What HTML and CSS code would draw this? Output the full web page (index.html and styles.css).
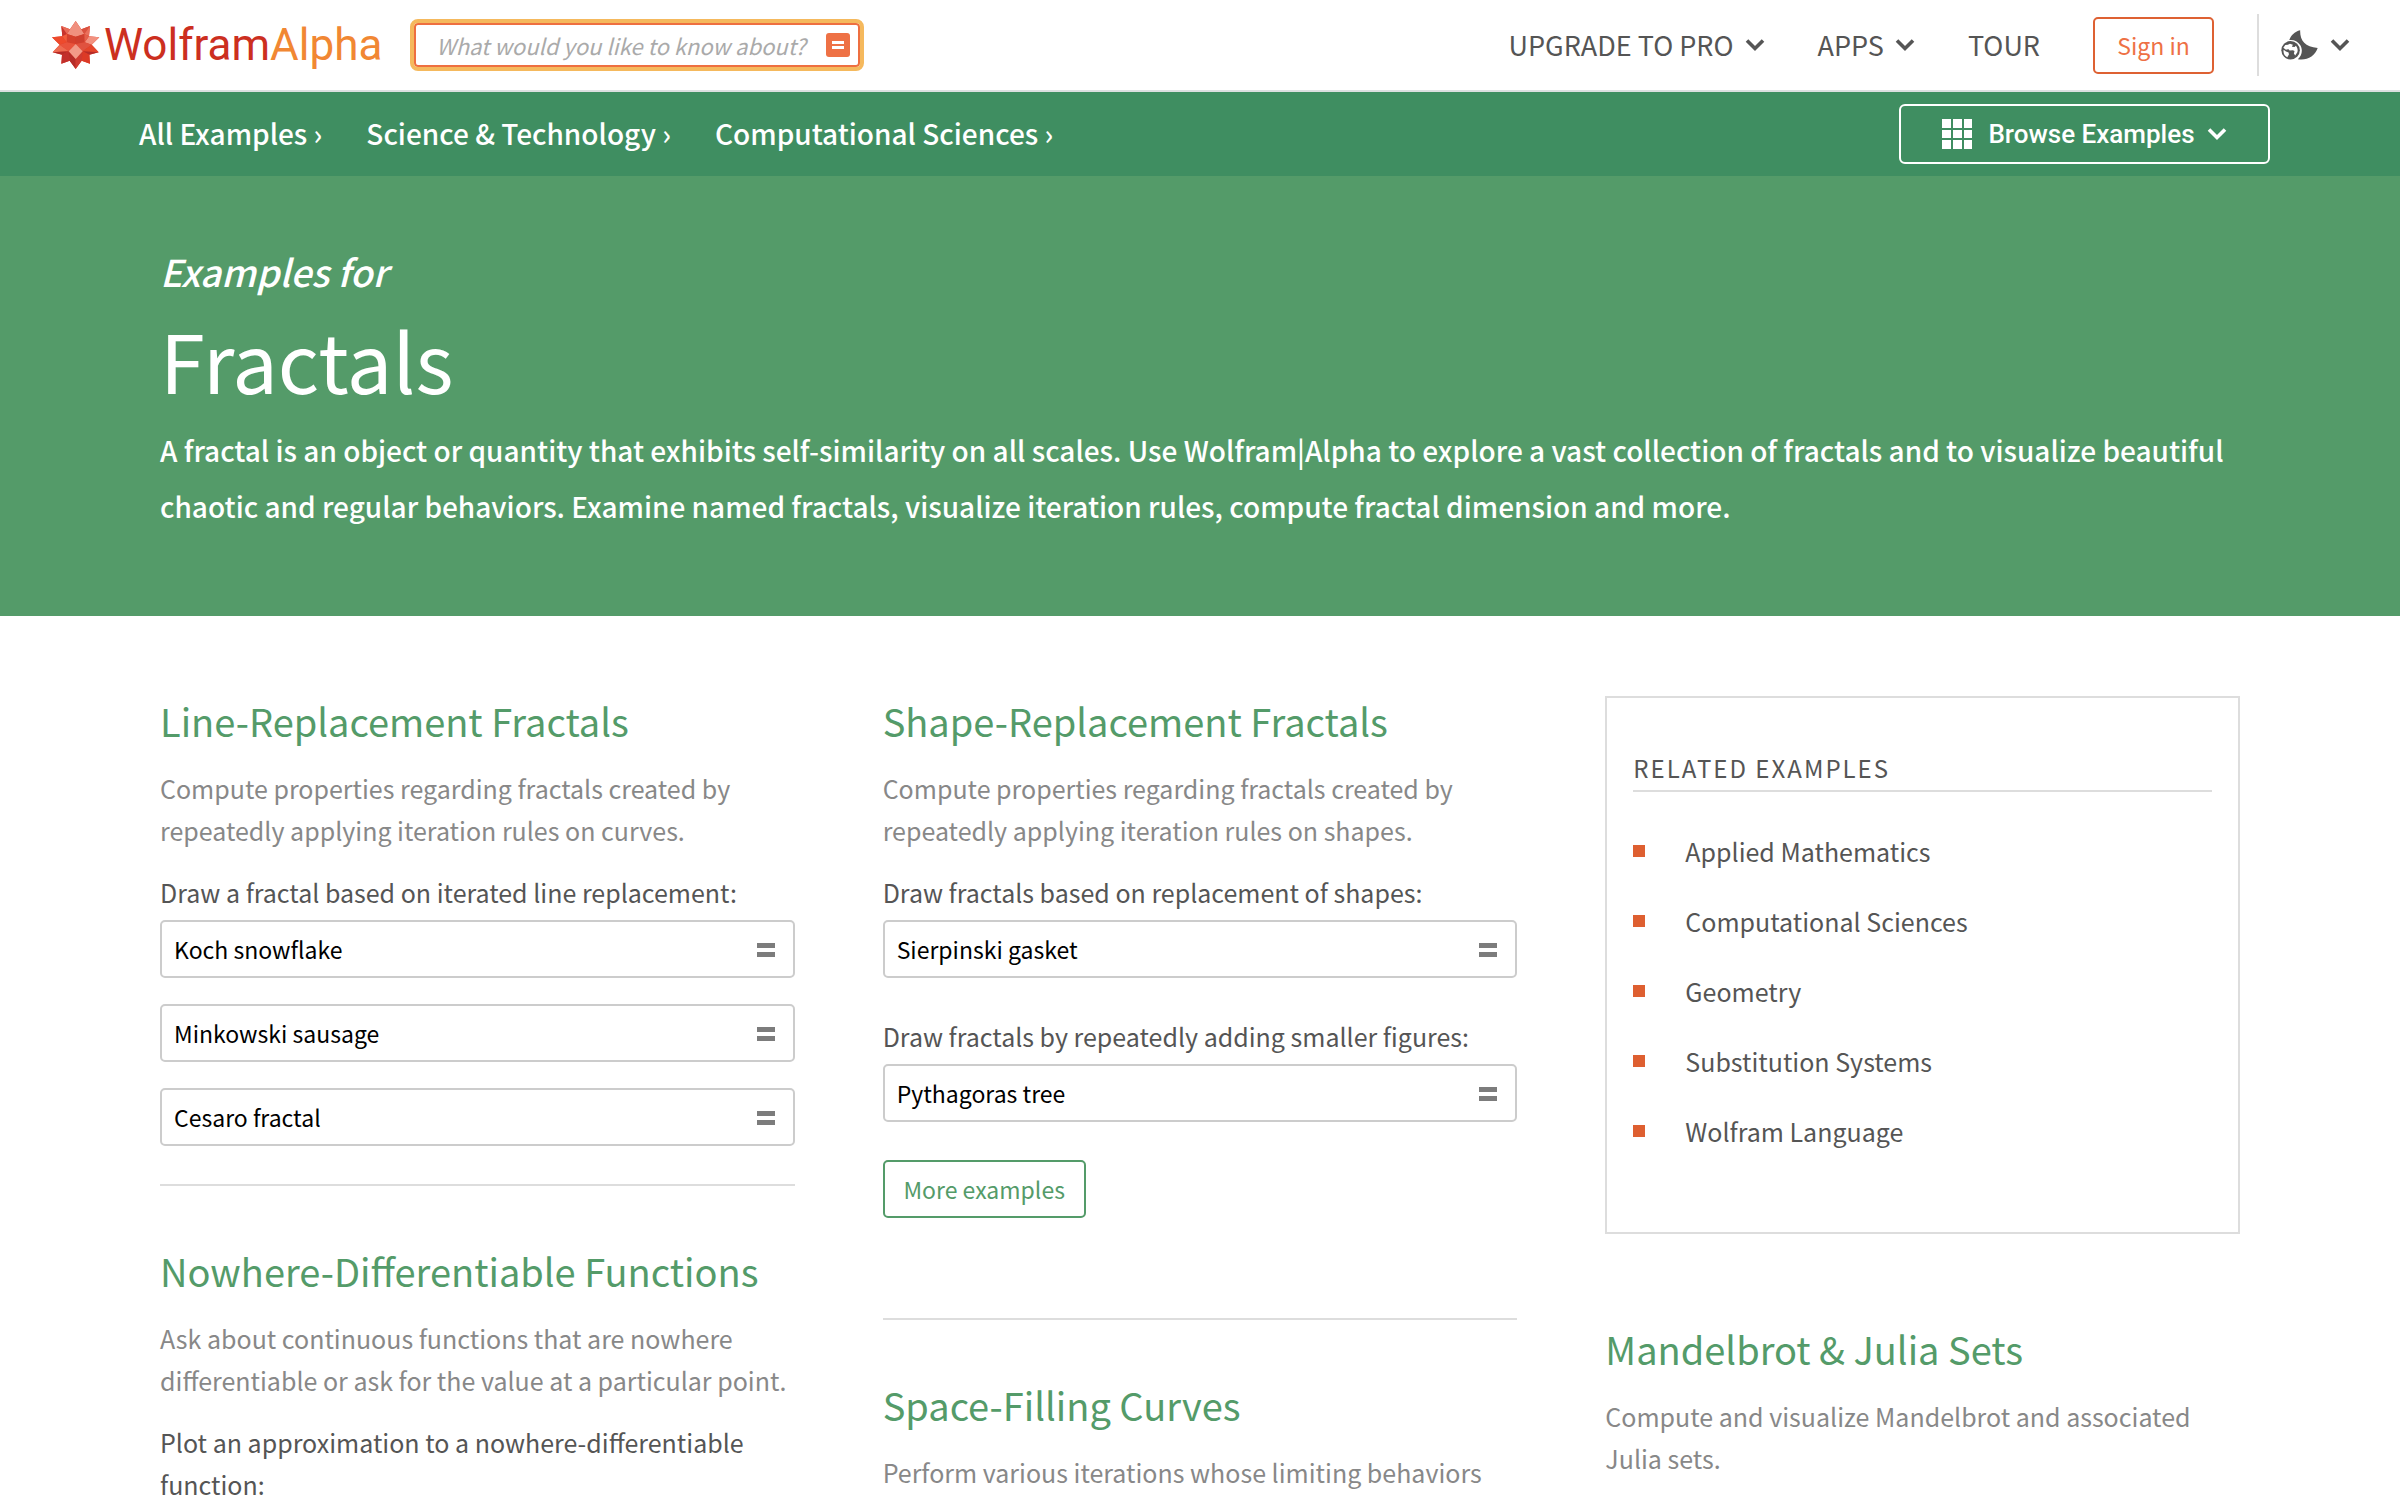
FILE: index.html
```
<!DOCTYPE html>
<html lang="en">
<head>
<meta charset="utf-8">
<title>Fractals - Wolfram|Alpha Examples</title>
<link rel="stylesheet" href="styles.css">
</head>
<body>
<svg class="sprite" aria-hidden="true">
  <symbol id="chevron" viewBox="0 0 20 14"><path d="M2 2.5l8 8 8-8" fill="none" stroke="currentColor" stroke-width="3.6"/></symbol>
  <symbol id="equals" viewBox="0 0 18 14"><path d="M0 0h18v5H0zM0 9h18v5H0z" fill="currentColor"/></symbol>
</svg>

<header class="topbar">
  <a class="logo" href="#" aria-label="WolframAlpha">
    <svg class="spikey" viewBox="20 24 144 144" aria-hidden="true">
      <path fill="#dc3b26" d="M91 24l17 25 26-10-3 31 31 3-23 22 21 23-28 7 2 27-25-9-18 25-18-25-25 9 2-27-28-7 21-23-23-22 31-3-3-31 26 10z"/>
      <path fill="#f0907f" d="M91 24l17 25 9 14-26 8-26-8 9-14z"/>
      <path fill="#c8342c" d="M48 39l17 24-14 7z"/>
      <path fill="#e86a57" d="M48 39l26 10-9 14z"/>
      <path fill="#d9513f" d="M134 39l-26 10 9 14z"/>
      <path fill="#ea6f5c" d="M134 39l-17 24 14 7z"/>
      <path fill="#ee4a2c" d="M20 73l31-3 13 18-21 7z"/>
      <path fill="#f2917f" d="M162 73l-31-3-13 18 21 7z"/>
      <path fill="#f05c3c" d="M51 70l14-7 1 26-2-1z"/>
      <path fill="#d5402d" d="M65 63l26 8v22l-27-5z"/>
      <path fill="#cf3f2f" d="M117 63l-26 8v22l27-5z"/>
      <path fill="#e4604c" d="M131 70l-14-7 1 25z"/>
      <path fill="#e9533c" d="M43 95l21-7 27 5-21 22z"/>
      <path fill="#ee6c52" d="M22 118l21-23 27 20z"/>
      <path fill="#b52c28" d="M22 118l48-3-20 10z"/>
      <path fill="#e0523f" d="M139 95l-21-7-27 5 21 22z"/>
      <path fill="#e4452b" d="M160 118l-21-23-27 20z"/>
      <path fill="#b52c28" d="M160 118l-48-3 20 10z"/>
      <path fill="#c22f2b" d="M48 152l2-27 20-10 3 28z"/>
      <path fill="#dc3a26" d="M134 152l-2-27-20-10-3 28z"/>
      <path fill="#b52c28" d="M70 115l21 23v30l-18-25z"/>
      <path fill="#cf3a30" d="M112 115l-21 23v30l18-25z"/>
      <path fill="#f29a88" d="M91 93l21 22-21 23-21-23z"/>
    </svg>
    <span class="wordmark">Wolfram<span class="wordmark-alpha">Alpha</span></span>
  </a>
  <form class="search">
    <input class="search-input" type="text" placeholder="What would you like to know about?" aria-label="What would you like to know about?">
    <button class="search-go" type="button" aria-label="Compute"><svg viewBox="0 0 12 8" width="12" height="8"><path d="M0 0h12v3H0zM0 5h12v3H0z" fill="#fff"/></svg></button>
  </form>
  <nav class="menu">
    <a class="menu-link" href="#">UPGRADE TO PRO <svg class="chevron"><use href="#chevron"/></svg></a>
    <a class="menu-link" href="#">APPS <svg class="chevron"><use href="#chevron"/></svg></a>
    <a class="menu-link" href="#">TOUR</a>
    <button class="sign-in" type="button">Sign in</button>
  </nav>
  <button class="prefs" type="button" aria-label="Language and theme">
    <svg class="prefs-icon" viewBox="64 29 112 90" aria-hidden="true">
      <path fill="#555" d="M122 29c-1 32 14 51 53 54-8 25-33 39-60 34 14-12 15-31 7-43-7-11-20-17-33-15 5-14 16-26 33-30z"/>
      <circle cx="93" cy="90" r="28" fill="#555"/>
      <path fill="#fff" d="M91 70l9 3-3 6 8 1 4-4c5 6 7 13 4 21l-6 9-4-6 2-8-5-2-10 1-3-4-8 1-8-6 6-8 8-1zM72 88l7 6 8 3 1 6-5 8c-8-4-13-12-11-23z"/>
    </svg>
    <svg class="chevron"><use href="#chevron"/></svg>
  </button>
</header>

<nav class="crumbs" aria-label="Categories">
  <a class="crumb" href="#">All Examples ›</a>
  <a class="crumb" href="#">Science &amp; Technology ›</a>
  <a class="crumb" href="#">Computational Sciences ›</a>
  <button class="browse" type="button">
    <svg class="grid-icon" viewBox="0 0 30 30" aria-hidden="true"><path fill="#fff" d="M0 0h9v9H0zM11 0h9v9h-9zM22 0h8v9h-8zM0 11h9v8H0zM11 11h9v8h-9zM22 11h8v8h-8zM0 21h9v9H0zM11 21h9v9h-9zM22 21h8v9h-8z"/></svg>
    Browse Examples
    <svg class="chevron"><use href="#chevron"/></svg>
  </button>
</nav>

<section class="hero">
  <p class="hero-kicker">Examples for</p>
  <h1 class="hero-title">Fractals</h1>
  <p class="hero-text">A fractal is an object or quantity that exhibits self-similarity on all scales. Use Wolfram|Alpha to explore a vast collection of fractals and to visualize beautiful chaotic and regular behaviors. Examine named fractals, visualize iteration rules, compute fractal dimension and more.</p>
</section>

<main class="columns">
  <div class="column">
    <section class="topic">
      <h2 class="topic-title"><a href="#">Line-Replacement Fractals</a></h2>
      <p class="topic-text">Compute properties regarding fractals created by repeatedly applying iteration rules on curves.</p>
      <div class="examples">
        <label class="example-label" for="koch">Draw a fractal based on iterated line replacement:</label>
        <div class="query"><input id="koch" type="text" value="Koch snowflake"><button type="button" aria-label="Compute"><svg><use href="#equals"/></svg></button></div>
        <div class="query"><input type="text" value="Minkowski sausage" aria-label="Example query"><button type="button" aria-label="Compute"><svg><use href="#equals"/></svg></button></div>
        <div class="query"><input type="text" value="Cesaro fractal" aria-label="Example query"><button type="button" aria-label="Compute"><svg><use href="#equals"/></svg></button></div>
      </div>
    </section>
    <hr class="rule">
    <section class="topic">
      <h2 class="topic-title"><a href="#">Nowhere-Differentiable Functions</a></h2>
      <p class="topic-text">Ask about continuous functions that are nowhere differentiable or ask for the value at a particular point.</p>
      <p class="example-label">Plot an approximation to a nowhere-differentiable function:</p>
    </section>
  </div>

  <div class="column">
    <section class="topic topic-more">
      <h2 class="topic-title"><a href="#">Shape-Replacement Fractals</a></h2>
      <p class="topic-text">Compute properties regarding fractals created by repeatedly applying iteration rules on shapes.</p>
      <div class="examples">
        <label class="example-label" for="gasket">Draw fractals based on replacement of shapes:</label>
        <div class="query"><input id="gasket" type="text" value="Sierpinski gasket"><button type="button" aria-label="Compute"><svg><use href="#equals"/></svg></button></div>
      </div>
      <div class="examples">
        <label class="example-label" for="tree">Draw fractals by repeatedly adding smaller figures:</label>
        <div class="query"><input id="tree" type="text" value="Pythagoras tree"><button type="button" aria-label="Compute"><svg><use href="#equals"/></svg></button></div>
      </div>
      <button class="more" type="button">More examples</button>
    </section>
    <hr class="rule">
    <section class="topic">
      <h2 class="topic-title"><a href="#">Space-Filling Curves</a></h2>
      <p class="topic-text">Perform various iterations whose limiting behaviors</p>
    </section>
  </div>

  <div class="column">
    <aside class="related">
      <h2 class="related-title">RELATED EXAMPLES</h2>
      <ul class="related-list">
        <li><a href="#">Applied Mathematics</a></li>
        <li><a href="#">Computational Sciences</a></li>
        <li><a href="#">Geometry</a></li>
        <li><a href="#">Substitution Systems</a></li>
        <li><a href="#">Wolfram Language</a></li>
      </ul>
    </aside>
    <section class="topic">
      <h2 class="topic-title"><a href="#">Mandelbrot &amp; Julia Sets</a></h2>
      <p class="topic-text">Compute and visualize Mandelbrot and associated Julia sets.</p>
    </section>
  </div>
</main>
</body>
</html>
```
FILE: styles.css
```
* {
  box-sizing: border-box;
  margin: 0;
  padding: 0;
}

body {
  background: #fff;
  color: #555;
  font: 400 25px/42px "Noto Sans CJK SC", "Open Sans", sans-serif;
}

a {
  color: inherit;
  text-decoration: none;
}

button,
input {
  font: inherit;
  color: inherit;
  background: none;
  border: 0;
}

.sprite {
  display: none;
}

.chevron {
  display: block;
  width: 20px;
  height: 14px;
}

/* Top bar */
.topbar {
  display: flex;
  align-items: center;
  height: 92px;
  padding: 0 50px 0 52px;
  border-bottom: 2px solid #dcdfe0;
}

.logo {
  display: flex;
  align-items: center;
  gap: 4px;
}

.spikey {
  display: block;
  width: 48px;
  height: 48px;
}

.wordmark {
  color: #cc2f1f;
  font: 400 44px/48px Roboto, sans-serif;
}

.wordmark-alpha {
  color: #f18733;
}

.search {
  display: flex;
  align-items: center;
  width: 454px;
  height: 52px;
  margin-left: 28px;
  padding: 0 10px 0 22px;
  border: 4px solid #f5b95d;
  border-radius: 8px;
  box-shadow: inset 0 0 0 2px #ee6f40;
}

.search-input {
  flex: 1;
  min-width: 0;
  font-size: 22px;
  line-height: 36px;
  outline: 0;
}

.search-input::placeholder {
  color: #aaa;
  font-style: italic;
  opacity: 1;
}

.search-go {
  display: grid;
  place-items: center;
  width: 24px;
  height: 24px;
  border-radius: 3px;
  background: #ee7145;
}

.menu {
  display: flex;
  align-items: center;
  gap: 53px;
  margin-left: auto;
  font-size: 27px;
}

.menu-link {
  display: flex;
  align-items: center;
  gap: 11px;
}

.sign-in {
  width: 121px;
  height: 57px;
  border: 2px solid #de6133;
  border-radius: 5px;
  color: #ee7145;
  font-size: 23px;
}

.prefs {
  display: flex;
  align-items: center;
  gap: 12px;
  height: 62px;
  margin-left: 43px;
  padding-left: 22px;
  border-left: 2px solid #ddd;
}

.prefs-icon {
  display: block;
  width: 37px;
  height: 30px;
}

/* Category trail */
.crumbs {
  display: flex;
  align-items: center;
  gap: 44px;
  height: 84px;
  padding: 0 130px 0 139px;
  background: #3f8e61;
  color: #fff;
  font-size: 28px;
  font-weight: 500;
  line-height: 40px;
}

.crumb {
  padding-bottom: 2px;
}

.browse {
  display: flex;
  align-items: center;
  justify-content: center;
  width: 371px;
  height: 60px;
  margin-left: auto;
  border: 2px solid #fff;
  border-radius: 6px;
  gap: 12px;
  font: 500 26px/40px Roboto, sans-serif;
}

.grid-icon {
  width: 30px;
  height: 30px;
  margin-right: 4px;
}

/* Hero */
.hero {
  padding: 67px 160px 82px;
  background: #549b69;
  color: #fff;
}

.hero-kicker {
  font-size: 37px;
  font-weight: 500;
  line-height: 56px;
  font-style: italic;
}

.hero-title {
  margin: 10px 0 13px;
  font-size: 81px;
  font-weight: 400;
  line-height: 100px;
}

.hero-text {
  font-size: 28px;
  font-weight: 500;
  line-height: 56px;
}

/* Content columns */
.columns {
  display: grid;
  grid-template-columns: repeat(3, minmax(0, 1fr));
  gap: 88px;
  padding: 80px 160px 0;
}

.topic-title {
  margin-bottom: 21px;
  color: #549b69;
  font-size: 38px;
  font-weight: 400;
  line-height: 50px;
}

.topic-text {
  margin-bottom: 20px;
  color: #888;
}

.examples + .examples {
  margin-top: 37px;
}

.example-label {
  display: block;
}

.query {
  display: flex;
  align-items: center;
  height: 58px;
  padding: 0 18px 0 12px;
  border: 2px solid #ccc;
  border-radius: 5px;
}

.example-label + .query {
  margin-top: 7px;
}

.query + .query {
  margin-top: 26px;
}

.query input {
  flex: 1;
  min-width: 0;
  color: #000;
  font-size: 23px;
}

.query button {
  width: 18px;
  height: 16px;
  padding-top: 2px;
  color: #7c7c7c;
}

.query svg {
  display: block;
  width: 18px;
  height: 14px;
}

.more {
  display: block;
  width: 203px;
  height: 58px;
  margin-top: 38px;
  border: 2px solid #549b69;
  border-radius: 5px;
  color: #549b69;
  font-size: 23px;
}

.rule {
  height: 2px;
  margin: 38px 0 60px;
  border: 0;
  background: #ddd;
}

.topic-more + .rule {
  margin-top: 100px;
}

/* Related examples */
.related {
  margin-bottom: 90px;
  padding: 50px 26px 80px;
  border: 2px solid #ddd;
}

.related-title {
  margin-bottom: 38px;
  padding-bottom: 3px;
  border-bottom: 2px solid #ddd;
  font-size: 24px;
  font-weight: 400;
  letter-spacing: 2px;
  line-height: 39px;
}

.related-list {
  display: grid;
  gap: 28px;
  list-style: none;
}

.related-list li {
  display: flex;
  align-items: center;
  gap: 40px;
}

.related-list li::before {
  content: "";
  width: 12px;
  height: 12px;
  background: #de5f30;
}
```
